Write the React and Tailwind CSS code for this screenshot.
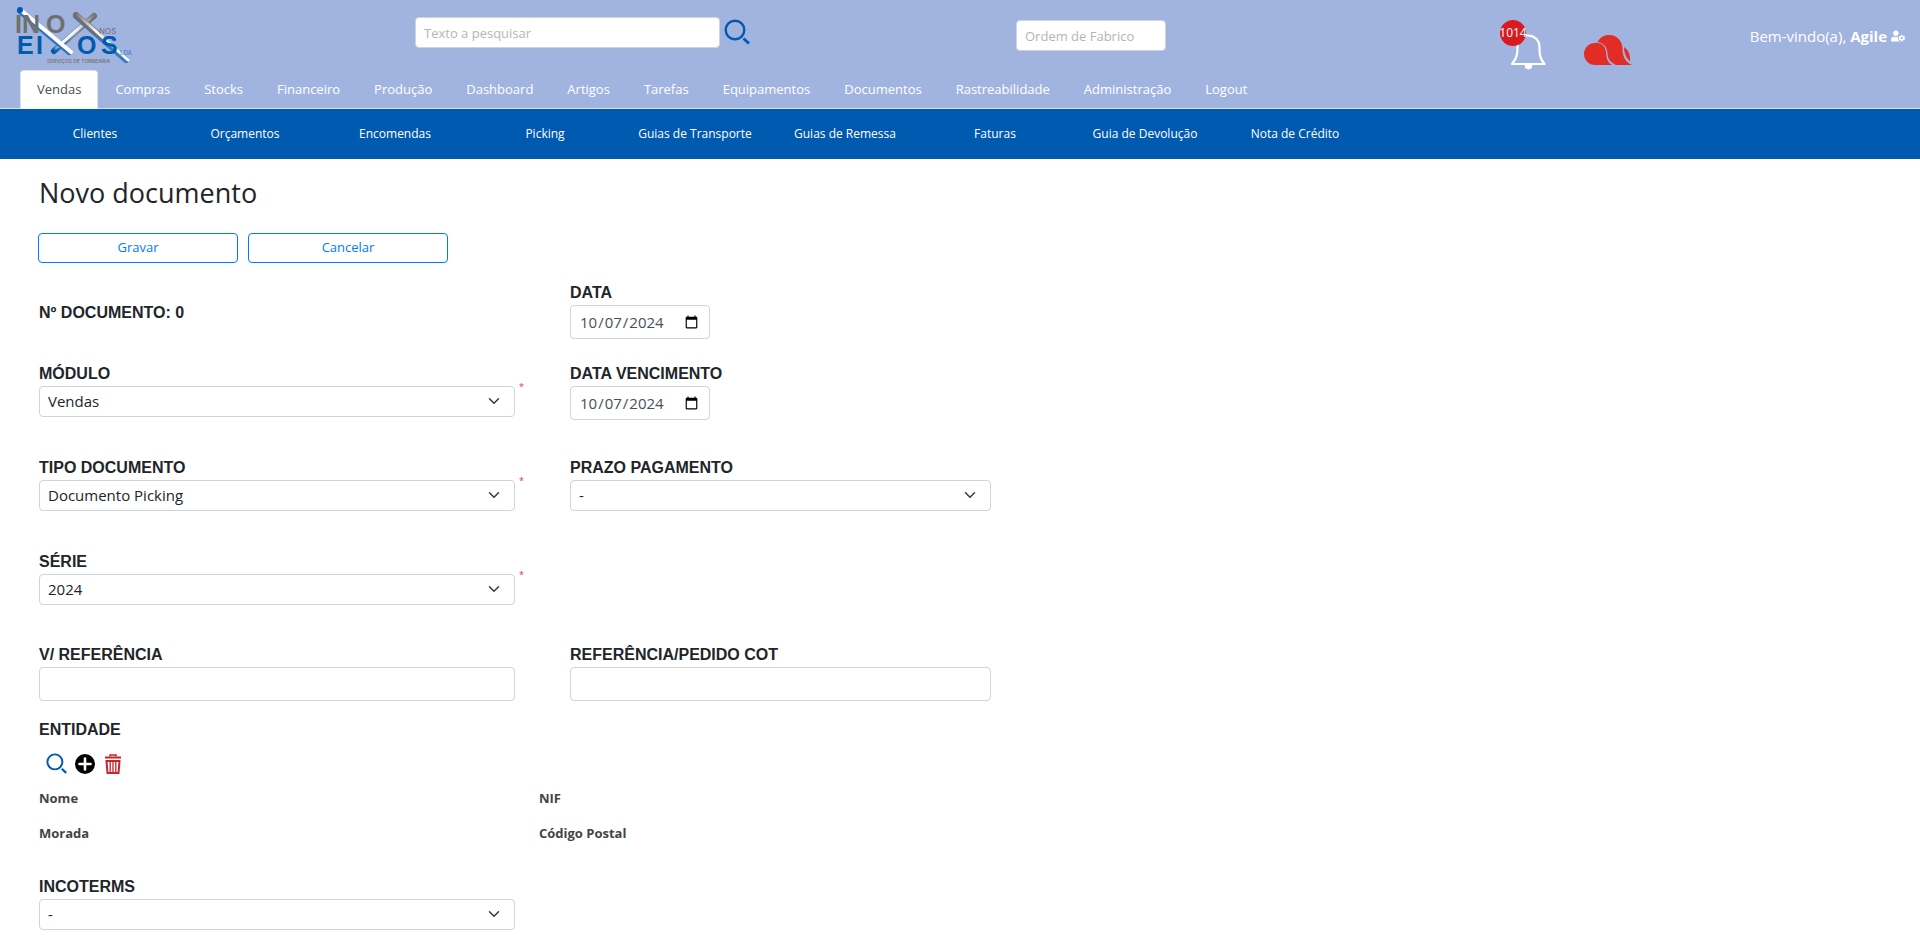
import { FaUserCog } from "react-icons/fa";

const tabs = [
  "Compras",
  "Stocks",
  "Financeiro",
  "Produção",
  "Dashboard",
  "Artigos",
  "Tarefas",
  "Equipamentos",
  "Documentos",
  "Rastreabilidade",
  "Administração",
  "Logout",
];

const sections = [
  "Clientes",
  "Orçamentos",
  "Encomendas",
  "Picking",
  "Guias de Transporte",
  "Guias de Remessa",
  "Faturas",
  "Guia de Devolução",
  "Nota de Crédito",
];

function Logo() {
  return (
    <svg viewBox="0 0 118 60" className="h-[60px] w-[118px]" role="img" aria-label="Inox nos Eixos">
      <defs>
        <linearGradient id="tubeLong" gradientUnits="userSpaceOnUse" x1="62" y1="11" x2="114" y2="56">
          <stop offset="0" stopColor="#7d7d7d" />
          <stop offset="0.35" stopColor="#f4f4f4" />
          <stop offset="1" stopColor="#ffffff" />
        </linearGradient>
        <linearGradient id="tubeUp" gradientUnits="userSpaceOnUse" x1="40" y1="48" x2="81" y2="12">
          <stop offset="0" stopColor="#005aaf" />
          <stop offset="0.2" stopColor="#ffffff" />
          <stop offset="0.6" stopColor="#eeeeee" />
          <stop offset="1" stopColor="#777777" />
        </linearGradient>
        <linearGradient id="tubeUpEdge" gradientUnits="userSpaceOnUse" x1="40" y1="48" x2="81" y2="12">
          <stop offset="0" stopColor="#005aaf" />
          <stop offset="0.5" stopColor="#7f93b0" />
          <stop offset="1" stopColor="#6b6b6b" />
        </linearGradient>
      </defs>
      <g strokeLinecap="round" fill="none">
        <path d="M80 12 40 47" stroke="url(#tubeUpEdge)" strokeWidth="6" />
        <path d="M80 11 41 45" stroke="url(#tubeUp)" strokeWidth="3" />
        <path d="M6 7 55 48" stroke="#2f74c4" strokeWidth="6" />
        <path d="M8 7 57 48" stroke="#ffffff" strokeWidth="4" />
        <path d="M62 12 112 56" stroke="#3b78c2" strokeWidth="6" />
        <path d="M62 11 84 30" stroke="#706f6f" strokeWidth="6" />
        <path d="M64 11 114 56" stroke="url(#tubeLong)" strokeWidth="3" />
        <circle cx="6" cy="6" r="3" fill="#005aaf" />
      </g>
      <g fontFamily="'Liberation Sans', sans-serif" fontSize="25" fontWeight="700">
        <text x="1" y="29" fill="#706f6f">I</text>
        <text x="8" y="29" fill="#706f6f">N</text>
        <text x="32" y="29" fill="#706f6f">O</text>
        <text x="3" y="50" fill="#005aaf">E</text>
        <text x="22" y="50" fill="#005aaf">I</text>
        <text x="63" y="50" fill="#005aaf">O</text>
        <text x="87" y="50" fill="#005aaf">S</text>
      </g>
      <g fontFamily="Inter, sans-serif">
        <text x="85" y="30" fontSize="8" fill="#706f6f">NOS</text>
        <text x="106" y="51" fontSize="6" fill="#2f74c4">LDA</text>
        <text x="33" y="59" fontSize="5" fontWeight="500" fill="#706f6f">SERVIÇOS DE TORNEARIA</text>
      </g>
    </svg>
  );
}

function SearchIcon({ className }) {
  return (
    <svg viewBox="0 0 26 26" className={className} fill="none" stroke="#005aaf" strokeWidth="2.400" aria-hidden="true">
      <circle cx="11" cy="11" r="9.300" />
      <path d="m19.500 19.500 5.500 5" strokeWidth="2.800" />
    </svg>
  );
}

function BellIcon() {
  return (
    <svg viewBox="0 0 36 36" className="size-9" fill="none" stroke="#fff" strokeWidth="2.200" aria-hidden="true">
      <path d="M2 30c5-6 5.500-10 5.500-17C7.500 5.500 12 1.500 18 1.500S29.500 6 29.500 13c0 7 0 11 5 17Z" strokeLinejoin="round" />
      <path d="M15 31.500a3.500 3.500 0 0 0 7 0Z" fill="#fff" strokeWidth="1" />
    </svg>
  );
}

function CloudIcon() {
  return (
    <svg viewBox="0 0 48 30" className="h-[30px] w-12" fill="#e22d27" role="img" aria-label="Cloud">
      <path d="M11 8C17 7 21.500 11 22 17c.3 5 1 10 6 13H11A11 11 0 0 1 11 8Z" />
      <path d="M13.500 7C16 2.500 20 0 25 0c8 0 13.500 6 13.500 13.500C38.500 21 41 27 48 30H32C25.500 27 23.500 23 23.300 17 22.500 11 18.500 7.500 13.500 7Z" />
      <path d="M40 12c4.500 3 6.500 8 6 14.500C42 23 40 18 40 12Z" />
    </svg>
  );
}

function PlusIcon() {
  return (
    <svg viewBox="0 0 20 20" className="size-5" aria-hidden="true">
      <circle cx="10" cy="10" r="10" />
      <path d="M10 4.500v11M4.500 10h11" stroke="#fff" strokeWidth="2.600" strokeLinecap="round" />
    </svg>
  );
}

function TrashIcon() {
  return (
    <svg viewBox="0 0 16 20" className="h-5 w-4" fill="none" stroke="#c7252b" aria-hidden="true">
      <path d="M5 2.500V1h6v1.500" strokeWidth="1.500" />
      <path d="M0 3.500h16" strokeWidth="2" />
      <path d="M1.500 7h13l-1 12h-11Z" strokeWidth="2" />
      <path d="M5.200 7v12M8 7v12M10.800 7v12" strokeWidth="1.300" />
    </svg>
  );
}

function Label({ htmlFor, children }) {
  return (
    <label htmlFor={htmlFor} className="block font-['Liberation_Sans',sans-serif] text-base leading-6 font-bold">
      {children}
    </label>
  );
}

function SelectField({ id, label, value, required }) {
  return (
    <div>
      <Label htmlFor={id}>{label}</Label>
      <div className="relative">
        <select
          id={id}
          defaultValue={value}
          className="block h-[31px] w-full appearance-none rounded-sm border border-[#ced4da] bg-white pr-9 pl-2 text-[15px]"
        >
          <option value={value}>{value}</option>
        </select>
        <svg
          viewBox="0 0 16 16"
          className="pointer-events-none absolute top-[9px] right-[13px] h-3 w-4"
          fill="none"
          stroke="#343a40"
          strokeWidth="2"
          strokeLinecap="round"
          strokeLinejoin="round"
          aria-hidden="true"
        >
          <path d="m2 5 6 6 6-6" />
        </svg>
        {required && (
          <span className="absolute -top-[5px] left-full ml-1 text-[9px] leading-3 text-[#dc3545]">*</span>
        )}
      </div>
    </div>
  );
}

function DateField({ id, label }) {
  return (
    <div>
      <Label htmlFor={id}>{label}</Label>
      <input
        id={id}
        type="date"
        defaultValue="2024-10-07"
        className="block h-[34px] w-[140px] rounded-sm border border-[#ced4da] px-2 text-[15px] text-[#495057]"
      />
    </div>
  );
}

function TextField({ id, label }) {
  return (
    <div>
      <Label htmlFor={id}>{label}</Label>
      <input id={id} type="text" className="block h-[34px] w-full rounded-sm border border-[#ced4da] px-2 text-[15px]" />
    </div>
  );
}

export default function App() {
  return (
    <div className="min-h-screen bg-white font-['Open_Sans',sans-serif] text-[#212529]">
      <header className="bg-[#a1b4e0]">
        <div className="grid h-[70px] grid-cols-[415fr_601fr_484fr_420fr]">
          <div className="pt-1 pl-[14px]">
            <Logo />
          </div>
          <form className="flex items-start gap-1 pt-[17px]">
            <input
              type="text"
              aria-label="Texto a pesquisar"
              placeholder="Texto a pesquisar"
              className="h-[31px] w-[305px] rounded-sm border border-[#ced4da] bg-white px-2 text-[13px] placeholder:text-[#b5b5b5]"
            />
            <button type="button" aria-label="Pesquisar" className="pt-0.5">
              <SearchIcon className="size-[26px]" />
            </button>
          </form>
          <div className="pt-5">
            <input
              type="text"
              aria-label="Ordem de Fabrico"
              placeholder="Ordem de Fabrico"
              className="block h-[31px] w-[150px] rounded-sm border border-[#ced4da] bg-white px-2 text-[13px] placeholder:text-[#b5b5b5]"
            />
          </div>
          <div className="flex items-start pr-[15px]">
            <button type="button" aria-label="Notificações" className="relative mt-[34px] ml-[10px]">
              <BellIcon />
              <span className="absolute -top-[14px] -left-[10px] flex size-[26px] items-center justify-center rounded-full bg-[#da1a20] text-[12px] text-white">
                1014
              </span>
            </button>
            <a href="#cloud" className="mt-[35px] ml-[38px]">
              <CloudIcon />
            </a>
            <a href="#conta" className="mt-6 ml-auto flex items-center gap-1 text-[15px] leading-6 text-white">
              <span>
                Bem-vindo(a), <b>Agile</b>
              </span>
              <FaUserCog className="size-[14px]" aria-hidden="true" />
            </a>
          </div>
        </div>
        <nav aria-label="Principal" className="flex border-b border-[#dee2e6] pl-5 text-[13px] leading-[21px]">
          <a href="#vendas" className="-mb-px rounded-t border border-b-0 border-[#dee2e6] bg-white px-4 py-2 text-[#495057]">
            Vendas
          </a>
          {tabs.map((tab) => (
            <a key={tab} href={"#" + tab} className="border border-b-0 border-transparent px-4 py-2 text-white">
              {tab}
            </a>
          ))}
        </nav>
      </header>
      <nav aria-label="Vendas" className="flex h-[50px] items-center bg-[#005aaf] pl-5 text-[12px] text-white">
        {sections.map((section) => (
          <a key={section} href={"#" + section} className="w-[150px] text-center">
            {section}
          </a>
        ))}
      </nav>

      <main className="pt-4 pr-5 pb-4 pl-[39px]">
        <h1 className="text-[27px] leading-9">Novo documento</h1>
        <form>
          <div className="mt-[22px] -ml-px flex gap-2.5 text-[13px] text-[#007bff]">
            <button type="button" className="h-[30px] w-[200px] rounded-sm border border-[#007bff]">
              Gravar
            </button>
            <button type="button" className="h-[30px] w-[200px] rounded-sm border border-[#007bff]">
              Cancelar
            </button>
          </div>

          <div className="mt-[18px] grid grid-cols-[476px_421px] grid-rows-[81px_94px_94px_93px_75px] gap-x-[55px]">
            <p className="pt-5 font-['Liberation_Sans',sans-serif] text-base leading-6 font-bold">Nº DOCUMENTO: 0</p>
            <DateField id="data" label="DATA" />
            <SelectField id="modulo" label="MÓDULO" value="Vendas" required />
            <DateField id="vencimento" label="DATA VENCIMENTO" />
            <SelectField id="tipo" label="TIPO DOCUMENTO" value="Documento Picking" required />
            <SelectField id="prazo" label="PRAZO PAGAMENTO" value="-" />
            <SelectField id="serie" label="SÉRIE" value="2024" required />
            <div />
            <TextField id="referencia" label="V/ REFERÊNCIA" />
            <TextField id="pedido" label="REFERÊNCIA/PEDIDO COT" />
          </div>

          <section>
            <h2 className="font-['Liberation_Sans',sans-serif] text-base leading-6 font-bold">ENTIDADE</h2>
            <div className="mt-[11px] flex gap-2 pl-[7px]">
              <button type="button" aria-label="Pesquisar entidade">
                <SearchIcon className="size-[21px]" />
              </button>
              <button type="button" aria-label="Adicionar entidade">
                <PlusIcon />
              </button>
              <button type="button" aria-label="Remover entidade" className="ml-0.5">
                <TrashIcon />
              </button>
            </div>
            <div className="mt-[14px] grid grid-cols-[500px_397px] gap-y-[15px] text-[13px] leading-5 font-bold text-[#444]">
              <span>Nome</span>
              <span>NIF</span>
              <span>Morada</span>
              <span>Código Postal</span>
            </div>
          </section>

          <div className="mt-8 w-[476px]">
            <SelectField id="incoterms" label="INCOTERMS" value="-" />
          </div>
        </form>
      </main>
    </div>
  );
}
